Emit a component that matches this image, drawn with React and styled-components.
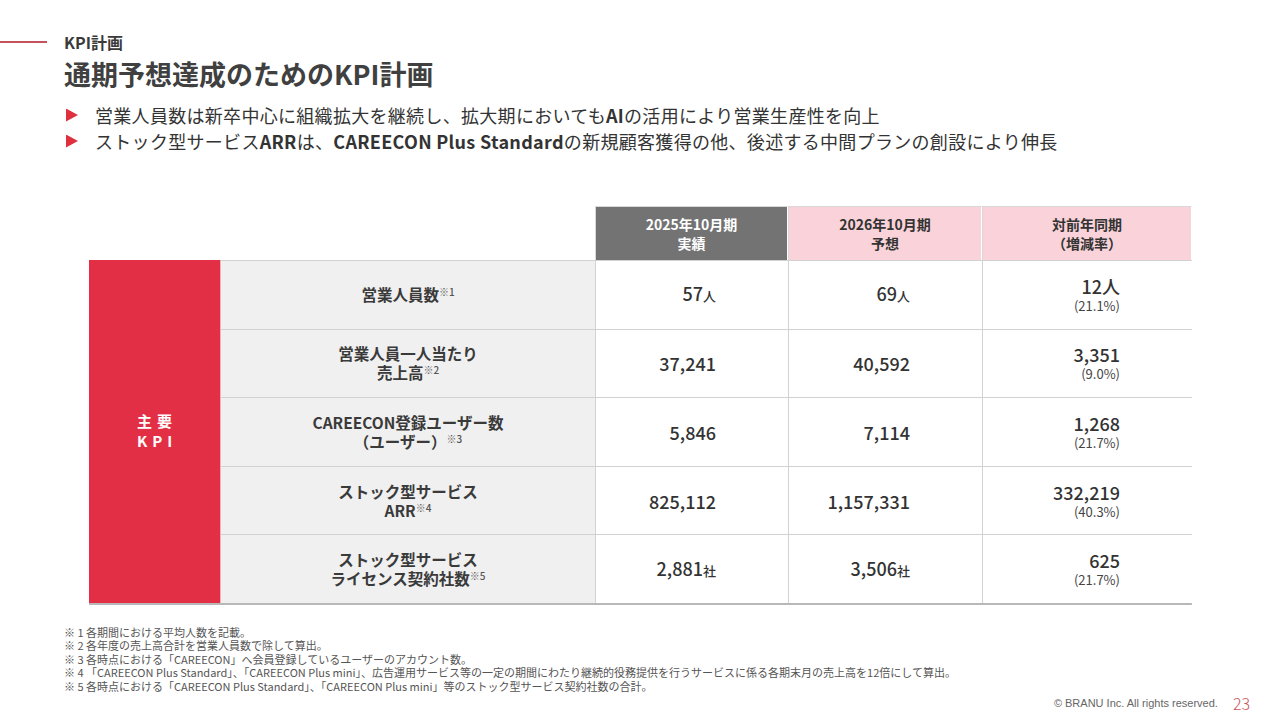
import styled, { createGlobalStyle } from "styled-components";

const GlobalStyle = createGlobalStyle`
  html, body {
    margin: 0;
    padding: 0;
    background: #ffffff;
  }
  body {
    font-family: "Noto Sans CJK JP", "Noto Sans", sans-serif;
    color: #333333;
  }
`;

const kpiRows = [
  {
    label: ["営業人員数"],
    note: "※1",
    actual: "57",
    plan: "69",
    unit: "人",
    diff: "12",
    diffUnit: "人",
    rate: "(21.1%)",
  },
  {
    label: ["営業人員一人当たり", "売上高"],
    note: "※2",
    actual: "37,241",
    plan: "40,592",
    diff: "3,351",
    rate: "(9.0%)",
  },
  {
    label: ["CAREECON登録ユーザー数", "（ユーザー）"],
    note: "※3",
    actual: "5,846",
    plan: "7,114",
    diff: "1,268",
    rate: "(21.7%)",
  },
  {
    label: ["ストック型サービス", "ARR"],
    note: "※4",
    actual: "825,112",
    plan: "1,157,331",
    diff: "332,219",
    rate: "(40.3%)",
  },
  {
    label: ["ストック型サービス", "ライセンス契約社数"],
    note: "※5",
    actual: "2,881",
    plan: "3,506",
    unit: "社",
    diff: "625",
    rate: "(21.7%)",
  },
];

const notes = [
  "※ 1 各期間における平均人数を記載。",
  "※ 2 各年度の売上高合計を営業人員数で除して算出。",
  "※ 3 各時点における「CAREECON」へ会員登録しているユーザーのアカウント数。",
  "※ 4 「CAREECON Plus Standard」、「CAREECON Plus mini」、広告運用サービス等の一定の期間にわたり継続的役務提供を行うサービスに係る各期末月の売上高を12倍にして算出。",
  "※ 5 各時点における「CAREECON Plus Standard」、「CAREECON Plus mini」等のストック型サービス契約社数の合計。",
];

const Page = styled.div`
  width: 1280px;
  height: 720px;
  box-sizing: border-box;
  padding-top: 31px;
  display: flex;
  flex-direction: column;
  overflow: hidden;
`;

const Eyebrow = styled.div`
  display: flex;
  align-items: center;
  gap: 17px;
  height: 22px;
`;

const Rule = styled.span`
  width: 47px;
  height: 2px;
  background: #c4525c;
`;

const EyebrowText = styled.span`
  font-size: 16px;
  font-weight: 700;
  color: #3a3a3a;
`;

const Title = styled.h1`
  margin: 4px 0 0 64px;
  font-size: 27px;
  line-height: 34px;
  font-weight: 700;
  color: #404040;
`;

const Bullets = styled.ul`
  list-style: none;
  margin: 11px 0 0 66px;
  padding: 0;
`;

const Bullet = styled.li`
  display: flex;
  align-items: center;
  gap: 17px;
  height: 26px;
  font-size: 18px;
  color: #333333;
  letter-spacing: 0.3px;
`;

const Arrow = styled.span`
  width: 12px;
  height: 13px;
  background: #e0303f;
  clip-path: polygon(0 0, 100% 50%, 0 100%);
  flex: none;
`;

const TableWrap = styled.div`
  margin: 52px 0 0 89px;
  width: 1103px;
`;

const Columns = `132px 374px 193px 194px 210px`;

const HeadRow = styled.div`
  display: grid;
  grid-template-columns: ${Columns};
  height: 54px;
`;

const HeadCell = styled.div`
  display: flex;
  flex-direction: column;
  align-items: center;
  justify-content: center;
  font-size: 14px;
  line-height: 19px;
  font-weight: 700;
  background: ${(p) => (p.$tone === "gray" ? "#737373" : "#f9d3d9")};
  color: ${(p) => (p.$tone === "gray" ? "#ffffff" : "#333333")};
  border: 1px solid #d8d8d8;
  border-right-color: #ffffff;
  border-bottom: none;
`;

const Body = styled.div`
  display: grid;
  grid-template-columns: ${Columns};
  grid-template-rows: repeat(5, 68.6px);
  border-right: 1px solid #c8c8c8;
  border-bottom: 2px solid #b8b8b8;
`;

const SideCell = styled.div`
  grid-row: 1 / span 5;
  background: #e32f45;
  border-right: 1px solid #f4b0b8;
  color: #ffffff;
  display: flex;
  flex-direction: column;
  align-items: center;
  justify-content: center;
  font-size: 15px;
  line-height: 20px;
  font-weight: 700;
  letter-spacing: 5px;
  padding-left: 5px;
`;

const LabelCell = styled.div`
  background: #f0f0f0;
  border-top: 1px solid #d2d2d2;
  display: flex;
  flex-direction: column;
  align-items: center;
  justify-content: center;
  font-size: 15.5px;
  line-height: 19px;
  font-weight: 700;
  color: #3a3a3a;
`;

const Note = styled.sup`
  font-size: 10px;
  font-weight: 500;
  color: #555555;
  vertical-align: 5px;
  line-height: 0;
`;

const ValueCell = styled.div`
  border-top: 1px solid #d2d2d2;
  border-left: 1px solid #d2d2d2;
  background: #ffffff;
  display: flex;
  flex-direction: column;
  align-items: flex-end;
  justify-content: center;
  gap: 2px;
  padding-right: 72px;
  color: #333333;
`;

const Big = styled.span`
  font-size: 18px;
  line-height: 20px;
  font-weight: 500;
`;

const Unit = styled.span`
  font-size: ${(p) => (p.$large ? "18px" : "13px")};
`;

const Rate = styled.span`
  font-size: 13px;
  line-height: 16px;
  color: #444444;
`;

const Notes = styled.div`
  margin: 21px 0 0 64px;
  font-size: 11px;
  line-height: 13.5px;
  color: #555555;
`;

const Footer = styled.div`
  display: flex;
  align-items: center;
  justify-content: flex-end;
  gap: 15px;
  height: 20px;
  padding-right: 30px;
`;

const Copy = styled.span`
  font-family: "Liberation Sans", "Noto Sans", sans-serif;
  font-size: 11px;
  color: #666666;
`;

const PageNo = styled.span`
  font-size: 16px;
  font-weight: 300;
  color: #c4525c;
`;

const App = () => {
  return (
    <>
      <GlobalStyle />
      <Page>
        <Eyebrow>
          <Rule />
          <EyebrowText>KPI計画</EyebrowText>
        </Eyebrow>
        <Title>通期予想達成のためのKPI計画</Title>
        <Bullets>
          <Bullet>
            <Arrow />
            <span>
              営業人員数は新卒中心に組織拡大を継続し、拡大期においても<b>AI</b>の活用により営業生産性を向上
            </span>
          </Bullet>
          <Bullet>
            <Arrow />
            <span>
              ストック型サービス<b>ARR</b>は、<b>CAREECON Plus Standard</b>の新規顧客獲得の他、後述する中間プランの創設により伸長
            </span>
          </Bullet>
        </Bullets>

        <TableWrap>
          <HeadRow>
            <div />
            <div />
            <HeadCell $tone="gray">
              <span>2025年10月期</span>
              <span>実績</span>
            </HeadCell>
            <HeadCell>
              <span>2026年10月期</span>
              <span>予想</span>
            </HeadCell>
            <HeadCell>
              <span>対前年同期</span>
              <span>（増減率）</span>
            </HeadCell>
          </HeadRow>
          <Body>
            <SideCell>
              <span>主要</span>
              <span>KPI</span>
            </SideCell>
            {kpiRows.map((row, i) => (
              <Row key={i} row={row} />
            ))}
          </Body>
        </TableWrap>

        <Notes>
          {notes.map((n, i) => (
            <div key={i}>{n}</div>
          ))}
        </Notes>
        <Footer>
          <Copy>© BRANU Inc. All rights reserved.</Copy>
          <PageNo>23</PageNo>
        </Footer>
      </Page>
    </>
  );
};

const Row = ({ row }) => {
  const last = row.label.length - 1;
  return (
    <>
      <LabelCell>
        {row.label.map((line, i) => (
          <span key={i}>
            {line}
            {i === last && <Note>{row.note}</Note>}
          </span>
        ))}
      </LabelCell>
      <ValueCell>
        <Big>
          {row.actual}
          {row.unit && <Unit>{row.unit}</Unit>}
        </Big>
      </ValueCell>
      <ValueCell>
        <Big>
          {row.plan}
          {row.unit && <Unit>{row.unit}</Unit>}
        </Big>
      </ValueCell>
      <ValueCell>
        <Big>
          {row.diff}
          {row.diffUnit && <Unit $large>{row.diffUnit}</Unit>}
        </Big>
        <Rate>{row.rate}</Rate>
      </ValueCell>
    </>
  );
};

export default App;
